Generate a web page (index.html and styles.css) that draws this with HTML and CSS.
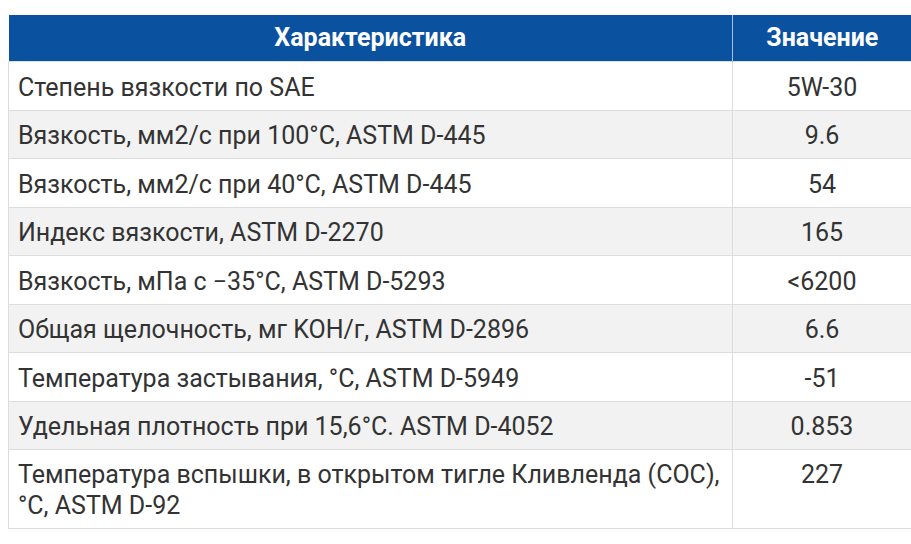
FILE: index.html
```html
<!DOCTYPE html>
<html lang="ru">
<head>
<meta charset="utf-8">
<link rel="stylesheet" href="styles.css">
</head>
<body>
<table class="spec">
  <thead>
    <tr><th class="name">Характеристика</th><th class="val">Значение</th></tr>
  </thead>
  <tbody>
    <tr><td>Степень вязкости по SAE</td><td class="val">5W-30</td></tr>
    <tr class="short"><td>Вязкость, мм2/с при 100°C, ASTM D-445</td><td class="val">9.6</td></tr>
    <tr><td>Вязкость, мм2/с при 40°C, ASTM D-445</td><td class="val">54</td></tr>
    <tr class="short"><td>Индекс вязкости, ASTM D-2270</td><td class="val">165</td></tr>
    <tr><td>Вязкость, мПа с −35°C, ASTM D-5293</td><td class="val">&lt;6200</td></tr>
    <tr class="short"><td>Общая щелочность, мг KOH/г, ASTM D-2896</td><td class="val">6.6</td></tr>
    <tr><td>Температура застывания, °C, ASTM D-5949</td><td class="val">-51</td></tr>
    <tr class="short"><td>Удельная плотность при 15,6°C. ASTM D-4052</td><td class="val">0.853</td></tr>
    <tr class="last"><td>Температура вспышки, в открытом тигле Кливленда (COC),<br>°C, ASTM D-92</td><td class="val">227</td></tr>
  </tbody>
</table>
</body>
</html>
```
FILE: styles.css
```css
html, body {
  margin: 0;
  background: #ffffff;
}
body {
  padding: 15px 0 0 8px;
  font-family: Roboto, "Liberation Sans", Arial, sans-serif;
}
.spec {
  width: 904px;
  border-collapse: collapse;
  font-size: 25px;
  color: #333333;
}
.spec th {
  background: #0a52a0;
  color: #ffffff;
  font-weight: 700;
  height: 46px;
  padding: 0 9px;
  text-align: center;
  line-height: 30px;
  border-left: 1px solid #a8c0dd;
}
.spec th:first-child {
  border-left: none;
}
.spec td {
  padding: 10px 9px 7px;
  line-height: 31px;
  border: 1px solid #dddddd;
  vertical-align: top;
  text-align: left;
}
.spec tr.short td {
  padding-top: 9px;
}
.spec tr.last td {
  padding-top: 9px;
}
.spec tbody tr:nth-child(even) td {
  background: #f2f2f2;
}
.spec td.val {
  text-align: center;
  width: 160px;
}
```
